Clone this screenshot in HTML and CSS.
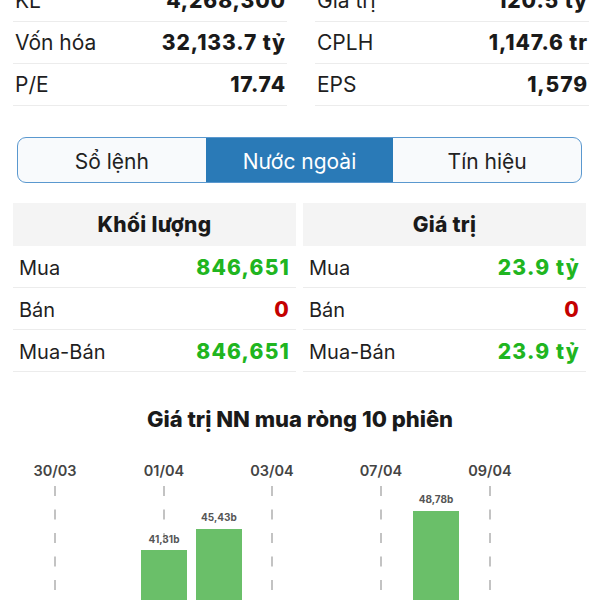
FILE: index.html
```html
<!DOCTYPE html>
<html lang="vi">
<head>
<meta charset="utf-8">
<title>Nước ngoài</title>
<link rel="stylesheet" href="styles.css">
</head>
<body>
<div class="page">
  <section class="stats">
    <div class="stats-col">
      <div class="stat-row"><span class="lbl">KL</span><span class="val">4,268,300</span></div>
      <div class="stat-row"><span class="lbl">Vốn hóa</span><span class="val">32,133.7 tỷ</span></div>
      <div class="stat-row"><span class="lbl">P/E</span><span class="val">17.74</span></div>
    </div>
    <div class="stats-col">
      <div class="stat-row"><span class="lbl">Giá trị</span><span class="val">120.5 tỷ</span></div>
      <div class="stat-row"><span class="lbl">CPLH</span><span class="val">1,147.6 tr</span></div>
      <div class="stat-row"><span class="lbl">EPS</span><span class="val">1,579</span></div>
    </div>
  </section>

  <nav class="tabs">
    <div class="tab">Sổ lệnh</div>
    <div class="tab active">Nước ngoài</div>
    <div class="tab">Tín hiệu</div>
  </nav>

  <section class="flows">
    <div class="flow-col">
      <div class="flow-head">Khối lượng</div>
      <div class="flow-row"><span class="lbl">Mua</span><span class="val up">846,651</span></div>
      <div class="flow-row"><span class="lbl">Bán</span><span class="val down">0</span></div>
      <div class="flow-row"><span class="lbl">Mua-Bán</span><span class="val up">846,651</span></div>
    </div>
    <div class="flow-col">
      <div class="flow-head">Giá trị</div>
      <div class="flow-row"><span class="lbl">Mua</span><span class="val up">23.9 tỷ</span></div>
      <div class="flow-row"><span class="lbl">Bán</span><span class="val down">0</span></div>
      <div class="flow-row"><span class="lbl">Mua-Bán</span><span class="val up">23.9 tỷ</span></div>
    </div>
  </section>

  <h2 class="chart-title">Giá trị NN mua ròng 10 phiên</h2>

  <svg class="chart" width="600" height="170" viewBox="0 0 600 170">
    <g class="grid">
      <line x1="55" y1="55" x2="55" y2="170"/>
      <line x1="164" y1="55" x2="164" y2="170"/>
      <line x1="272" y1="55" x2="272" y2="170"/>
      <line x1="381" y1="55" x2="381" y2="170"/>
      <line x1="490" y1="55" x2="490" y2="170"/>
    </g>
    <g class="xlabels">
      <text x="55" y="45">30/03</text>
      <text x="164" y="45">01/04</text>
      <text x="272" y="45">03/04</text>
      <text x="381" y="45">07/04</text>
      <text x="490" y="45">09/04</text>
    </g>
    <g class="bars">
      <rect x="141" y="119" width="46" height="60"/>
      <rect x="196" y="98" width="46" height="80"/>
      <rect x="413" y="80" width="46" height="100"/>
    </g>
    <g class="blabels">
      <text x="164" y="112">41,31b</text>
      <text x="219" y="90">45,43b</text>
      <text x="436" y="72">48,78b</text>
    </g>
  </svg>
</div>
</body>
</html>
```

FILE: styles.css
```css
* { box-sizing: border-box; }
html, body { margin: 0; padding: 0; background: #ffffff; }
body {
  font-family: Inter, "Liberation Sans", Arial, sans-serif;
  color: #1d1d1f;
  width: 600px;
  height: 600px;
  overflow: hidden;
}
.page { display: flex; flex-direction: column; }

/* stats */
.stats {
  display: grid;
  grid-template-columns: 274px 274px;
  column-gap: 28px;
  padding: 0 13px;
  margin-top: -20px;
}
.stat-row {
  height: 42px;
  border-bottom: 1px solid #ececec;
  display: flex;
  justify-content: space-between;
  align-items: center;
  font-size: 21px;
  padding: 0 1px 0 2px;
}
.lbl { font-weight: 400; color: #1f1f1f; }
.val { font-weight: 800; color: #1a1a1a; letter-spacing: 0.9px; }

/* tabs */
.tabs {
  margin: 31px 18px 0 17px;
  height: 46px;
  border: 1.5px solid #5a98cf;
  border-radius: 9px;
  overflow: hidden;
  display: grid;
  grid-template-columns: 1fr 1fr 1fr;
  background: #f8fafc;
}
.tab {
  display: flex;
  align-items: center;
  justify-content: center;
  font-size: 21px;
  color: #222;
  padding-top: 2px;
}
.tab.active { background: #2a7ab7; color: #ffffff; }

/* flows */
.flows {
  margin: 20px 14px 0 13px;
  display: grid;
  grid-template-columns: 1fr 1fr;
  column-gap: 7px;
}
.flow-head {
  height: 43px;
  background: #f4f4f4;
  display: flex;
  align-items: center;
  justify-content: center;
  font-weight: 800;
  font-size: 21px;
  letter-spacing: 0.3px;
  color: #1a1a1a;
}
.flow-row {
  height: 42px;
  border-bottom: 1px solid #ececec;
  display: flex;
  justify-content: space-between;
  align-items: center;
  padding: 2px 6px 0;
  font-size: 20px;
}
.flow-row .val { font-size: 21px; letter-spacing: 1.2px; }
.val.up { color: #20b520; }
.val.down { color: #c40000; }

/* chart */
.chart-title {
  margin: 35px 0 0;
  height: 24px;
  line-height: 24px;
  text-align: center;
  font-size: 22px;
  font-weight: 800;
  color: #1a1a1a;
}
.chart { display: block; }
.grid line {
  stroke: #b0b0b0;
  stroke-width: 1.5;
  stroke-dasharray: 10 13.5;
}
.xlabels text {
  font-family: Inter, "Liberation Sans", sans-serif;
  font-size: 14.5px;
  font-weight: 600;
  fill: #444;
  text-anchor: middle;
}
.bars rect { fill: #6abf69; }
.blabels text {
  font-family: Inter, "Liberation Sans", sans-serif;
  font-size: 10px;
  font-weight: 700;
  fill: #555;
  text-anchor: middle;
}
```
